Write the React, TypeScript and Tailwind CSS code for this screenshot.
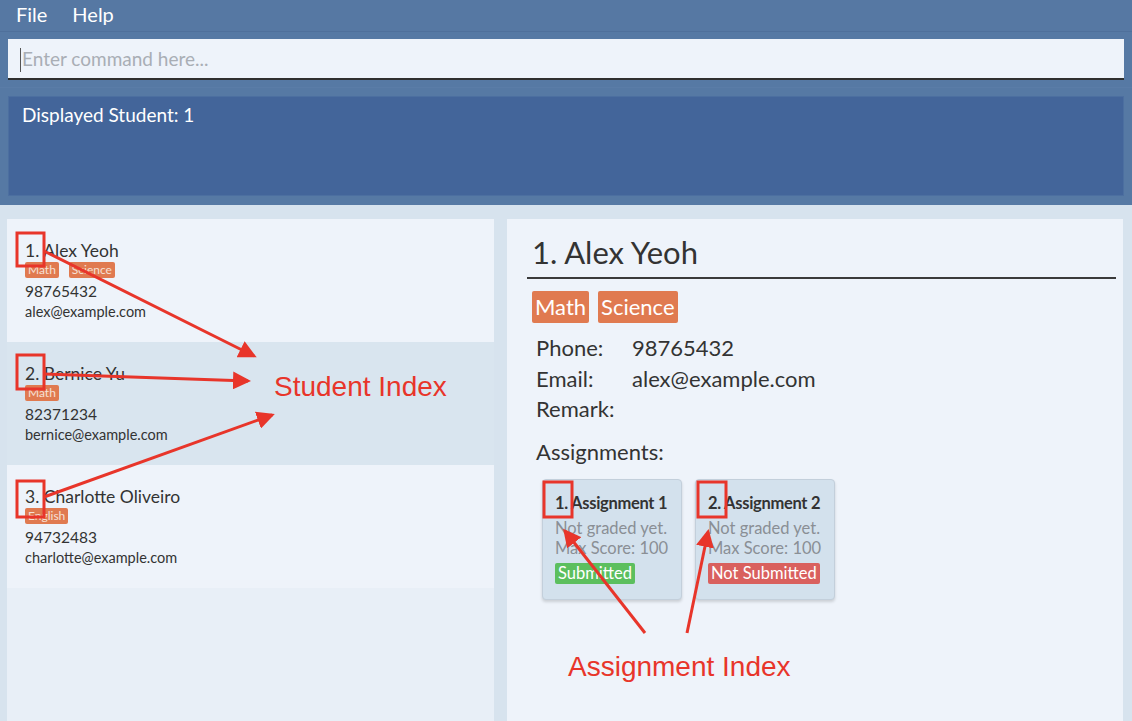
import React from 'react'

const students = [
  { name: 'Alex Yeoh', tags: ['Math', 'Science'], phone: '98765432', email: 'alex@example.com' },
  { name: 'Bernice Yu', tags: ['Math'], phone: '82371234', email: 'bernice@example.com' },
  { name: 'Charlotte Oliveiro', tags: ['English'], phone: '94732483', email: 'charlotte@example.com' },
]

const assignments = [
  { title: 'Assignment 1', submitted: true },
  { title: 'Assignment 2', submitted: false },
]

const Annotations = () => (
  <svg className="absolute inset-0 pointer-events-none" width={1132} height={721}>
    <defs>
      <marker id="head" markerWidth="6" markerHeight="6" refX="5" refY="3" orient="auto" markerUnits="strokeWidth">
        <path d="M0,0 L6,3 L0,6 z" fill="#e8352a" />
      </marker>
    </defs>
    <g fill="none" stroke="#e8352a" strokeWidth={3}>
      <rect x={17} y={233} width={27} height={33} />
      <rect x={17} y={355} width={27} height={34} />
      <rect x={17} y={481} width={27} height={36} />
      <rect x={544} y={482} width={28} height={35} />
      <rect x={698} y={482} width={28} height={35} />
      <line x1={44} y1={251} x2={254} y2={356} markerEnd="url(#head)" />
      <line x1={44} y1={374} x2={248} y2={381} markerEnd="url(#head)" />
      <line x1={44} y1={497} x2={272} y2={415} markerEnd="url(#head)" />
      <line x1={645} y1={633} x2={565} y2={531} markerEnd="url(#head)" />
      <line x1={687} y1={633} x2={708} y2={532} markerEnd="url(#head)" />
    </g>
    <text x={274} y={396} fill="#e8352a" fontSize={28} fontFamily="'Liberation Sans', Arial, sans-serif">Student Index</text>
    <text x={568} y={676} fill="#e8352a" fontSize={28} fontFamily="'Liberation Sans', Arial, sans-serif">Assignment Index</text>
  </svg>
)

const Tag = ({ label, big }: { label: string; big?: boolean }) => (
  <span
    className={
      big
        ? 'bg-[#e07a50] text-white text-[22px] leading-[32px] px-[3px] rounded-[2px]'
        : 'bg-[#e07a50] text-[#f6e0d6] text-[12px] leading-[16px] px-[3px] rounded-[2px]'
    }
  >
    {label}
  </span>
)

export default function App() {
  return (
    <div className="relative w-[1132px] h-[721px] overflow-hidden bg-[#d7e3ee] font-['Lato',sans-serif] text-[#333]">
      {/* menu bar */}
      <div className="h-[32px] bg-[#5678a3] flex items-start gap-[25px] px-[16px] text-white text-[20px] leading-[26px] pt-[1px] border-b border-[#4f709b]">
        <span>File</span>
        <span>Help</span>
      </div>
      {/* command box */}
      <div className="h-[56px] bg-[#5679a4] px-[8px] pt-[7px] pr-[8px] border-b border-[#5a7ca7]">
        <div className="h-[41px] bg-[#eef3fa] border-b-2 border-[#2f2f2f] flex items-center pl-[12px] pt-[2px] text-[19px] text-[#a9aeb5]">
          <span className="w-px h-[24px] bg-[#555] mr-[1px]" />
          Enter command here...
        </div>
      </div>
      {/* result display */}
      <div className="h-[117px] bg-[#5679a4] px-[8px] pt-[8px] pb-[9px]">
        <div className="h-full bg-[#43659a] border border-[#4c6fa0] px-[13px] pt-[4px] text-white text-[19px]">
          Displayed Student: 1
        </div>
      </div>
      {/* main */}
      <div className="flex gap-[13px] pl-[7px] pr-[9px] pt-[14px] h-[516px]">
        <div className="w-[487px] bg-[#e8eff7] flex flex-col">
          {students.map((s, i) => (
            <div key={s.name} className={'h-[123px] pl-[18px] pt-[19px] ' + (i === 1 ? 'bg-[#d9e5ef]' : 'bg-[#eef3fa]')}>
              <div className="text-[17.5px] leading-[25px] text-[#333]">
                {i + 1}. {s.name}
              </div>
              <div className="flex gap-[10px] mt-[-1px]">
                {s.tags.map((t) => (
                  <Tag key={t} label={t} />
                ))}
              </div>
              <div className="text-[15.5px] leading-[21px] text-[#333] mt-[3px]">{s.phone}</div>
              <div className="text-[14.5px] leading-[20px] text-[#333]">{s.email}</div>
            </div>
          ))}
        </div>
        <div className="flex-1 bg-[#eef3fa] pl-[20px] pr-[7px] pt-[12px]">
          <div className="text-[31px] leading-[42px] pl-[5px] pb-[4px] border-b-2 border-[#3a3a3a] text-[#333]">
            1. Alex Yeoh
          </div>
          <div className="flex gap-[9px] mt-[12px] pl-[5px]">
            <Tag big label="Math" />
            <Tag big label="Science" />
          </div>
          <div className="mt-[10px] pl-[9px] text-[22px] leading-[30.5px] text-[#333]">
            <div className="flex">
              <span className="w-[96px]">Phone:</span>
              <span>98765432</span>
            </div>
            <div className="flex">
              <span className="w-[96px]">Email:</span>
              <span>alex@example.com</span>
            </div>
            <div>Remark:</div>
            <div className="mt-[12px]">Assignments:</div>
          </div>
          <div className="flex gap-[13px] mt-[12px] pl-[15px]">
            {assignments.map((a, i) => (
              <div
                key={a.title}
                className="w-[140px] h-[121px] bg-[#d3e1ed] border border-[#c3cfdb] rounded-[4px] shadow-[0_2px_3px_rgba(0,0,0,0.15)] pl-[12px] pt-[12px]"
              >
                <div className="text-[16.5px] leading-[22px] font-bold text-[#333] tracking-[-0.3px]">
                  {i + 1}. {a.title}
                </div>
                <div className="text-[16.5px] leading-[20px] text-[#8a8f95] mt-[4px]">Not graded yet.</div>
                <div className="text-[16.5px] leading-[20px] text-[#8a8f95]">Max Score: 100</div>
                <span
                  className={
                    'inline-block mt-[5px] text-[16.5px] leading-[21px] text-white px-[3px] rounded-[2px] ' +
                    (a.submitted ? 'bg-[#5cbf5e]' : 'bg-[#d9605e]')
                  }
                >
                  {a.submitted ? 'Submitted' : 'Not Submitted'}
                </span>
              </div>
            ))}
          </div>
        </div>
      </div>
      <Annotations />
    </div>
  )
}
